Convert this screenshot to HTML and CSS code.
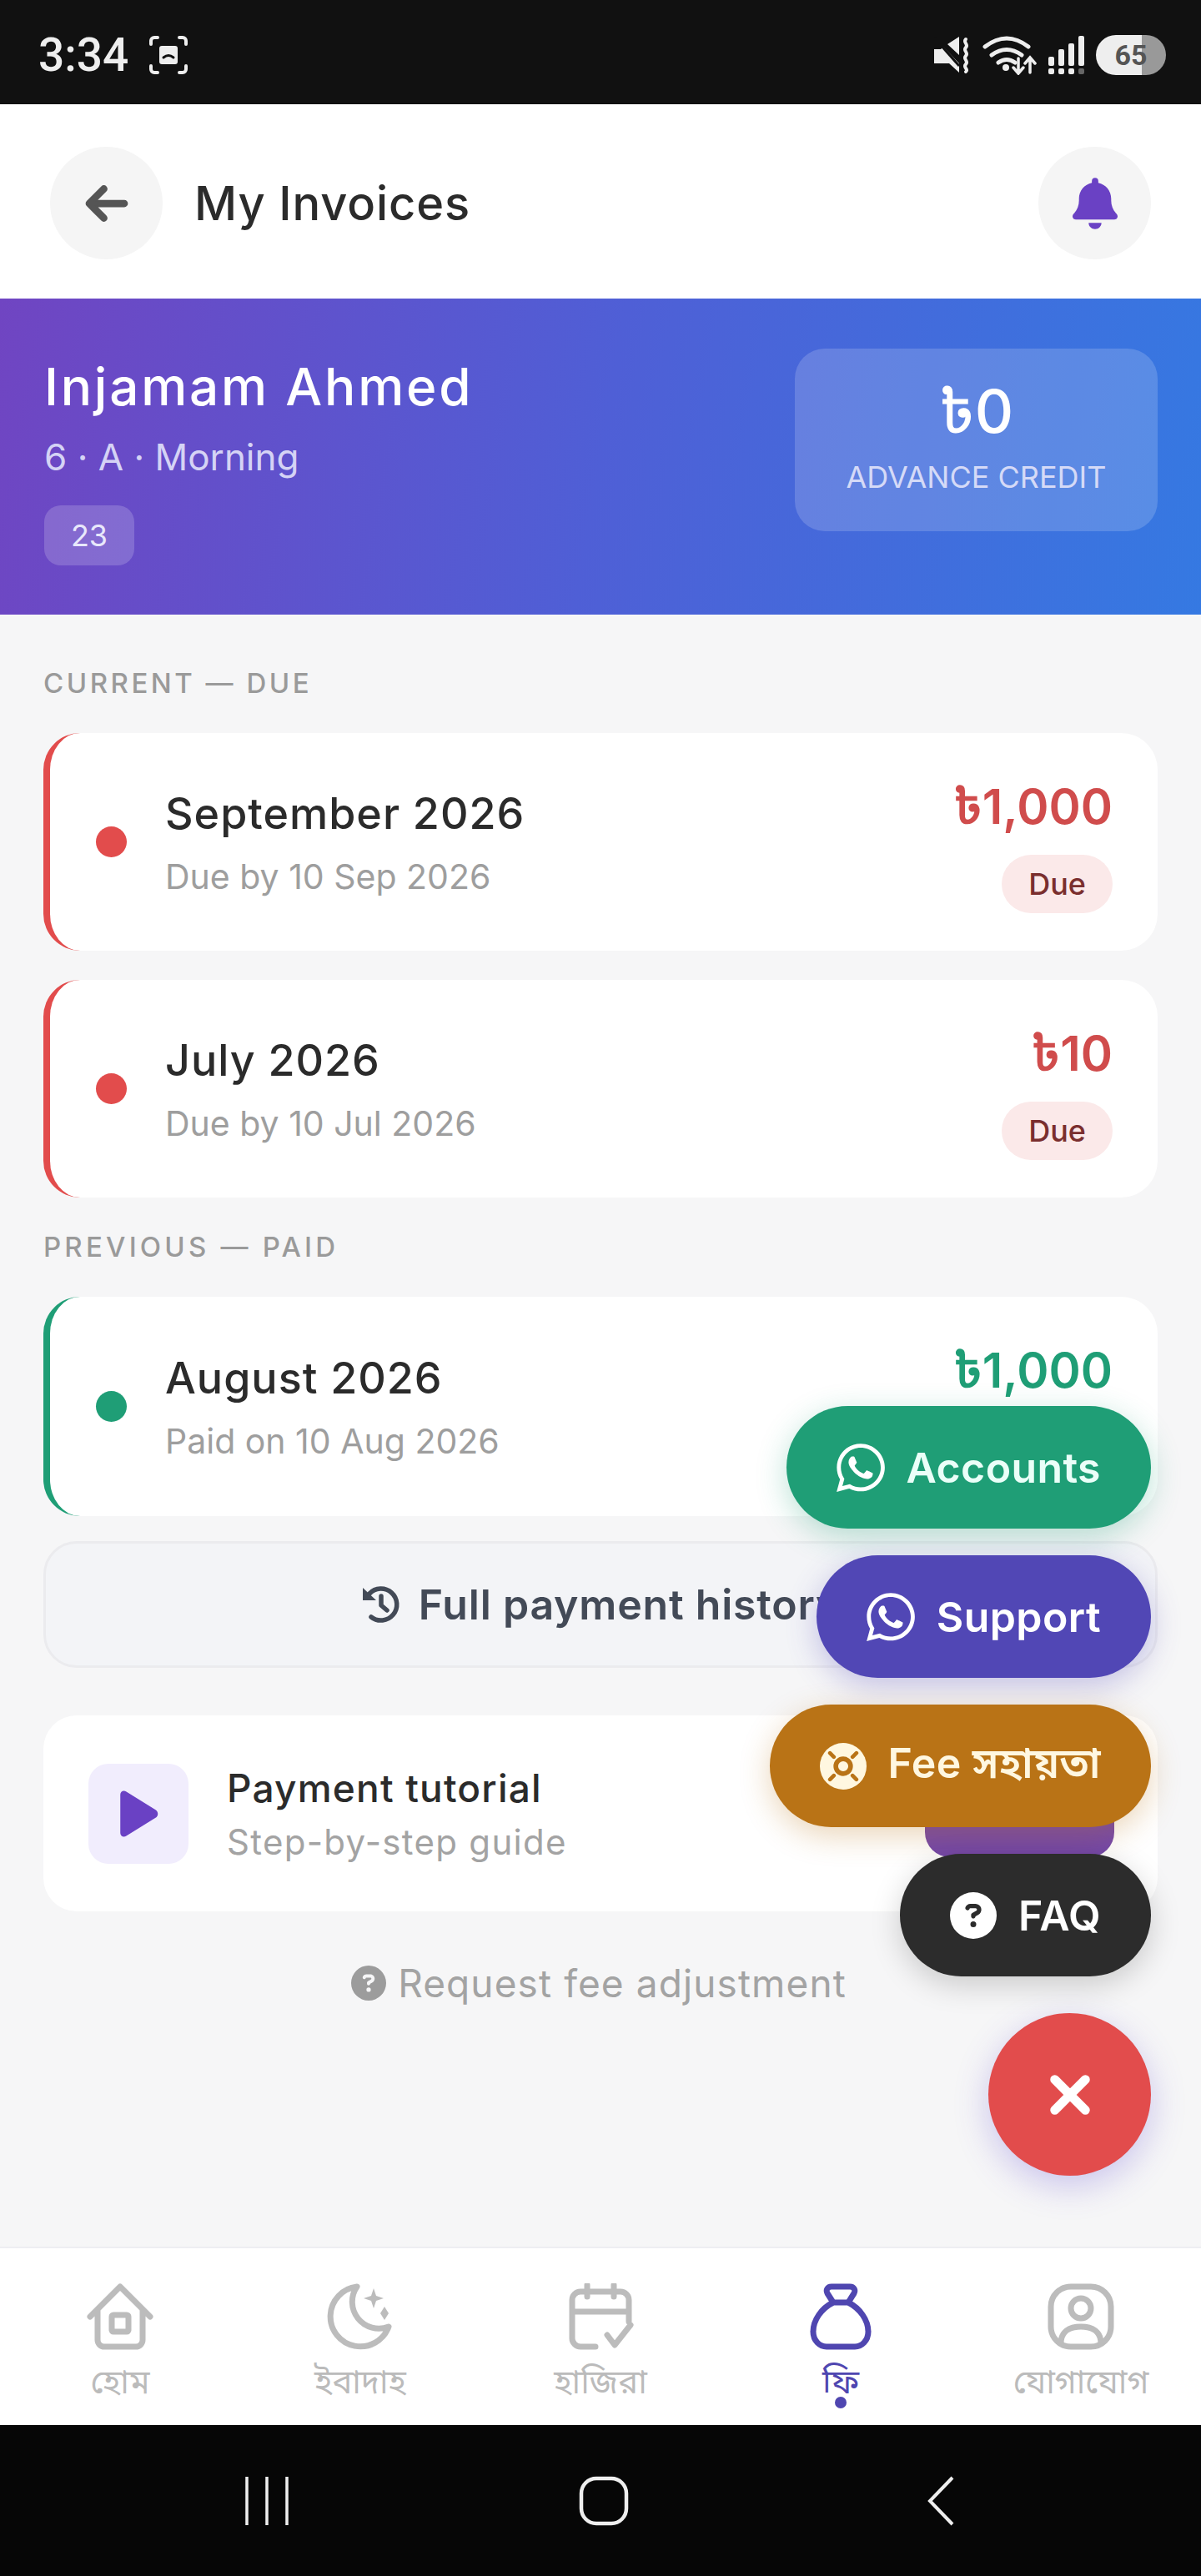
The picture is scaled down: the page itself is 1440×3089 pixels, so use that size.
FILE: index.html
```html
<!DOCTYPE html>
<html lang="en">
<head>
    <meta charset="UTF-8">
    <meta name="viewport" content="width=device-width, initial-scale=1.0">
    <title>My Invoices</title>
    <link rel="stylesheet" href="styles.css">
</head>
<body>
<div class="screen">
    <div class="statusbar">
        <div class="status-left">
            <span class="clock">3:34</span>
            <svg class="shot-icon" viewBox="0 0 48 48" fill="none" stroke="#eee" stroke-width="4" stroke-linecap="round"><path d="M3 11V7a4 4 0 0 1 4-4h4M37 3h4a4 4 0 0 1 4 4v4M45 37v4a4 4 0 0 1-4 4h-4M11 45H7a4 4 0 0 1-4-4v-4"/><rect x="13" y="13" width="22" height="22" rx="3" fill="#eee" stroke="none"/><path d="M18 27q6-5 12 0" stroke="#111" stroke-width="3"/></svg>
        </div>
        <div class="status-right">
            <svg class="mute-icon" viewBox="0 0 46 48" fill="#eee"><path d="M2 17h8l3-3 19 20v11L20 34H2zM18 11 32 2v22z"/><path d="M2 3 32 37" stroke="#111" stroke-width="3"/><path d="M40 5c-4 4 4 6 0 10s4 6 0 10 4 6 0 10 4 6 0 9" fill="none" stroke="#eee" stroke-width="4" stroke-linecap="round"/></svg>
            <svg class="wifi-icon" viewBox="0 0 66 48" fill="none" stroke="#eee" stroke-width="5" stroke-linecap="round"><path d="M3 14q26-20 52 0M11 24q18-13 36 0M19 33q10-7 20 0"/><circle cx="28" cy="39" r="4" fill="#eee" stroke="none"/><path d="M43 28v17m-6-6 6 7 6-7M57 45V28m-6 6 6-7 6 7" stroke-width="3.500"/></svg>
            <svg class="signal-icon" viewBox="0 0 46 48" fill="#eee"><rect x="1" y="26" width="7" height="11" rx="2"/><rect x="13" y="17" width="7" height="20" rx="2"/><rect x="25" y="10" width="7" height="27" rx="2"/><rect x="37" y="1" width="7" height="36" rx="2"/><rect x="1" y="40" width="7" height="7" rx="2"/><rect x="13" y="40" width="7" height="7" rx="2"/><rect x="25" y="40" width="7" height="7" rx="2"/><rect x="37" y="40" width="7" height="7" rx="2" fill="#666"/></svg>
            <span class="battery">65</span>
        </div>
    </div>

    <header class="topbar">
        <div class="topbar-left">
            <span class="round-btn">
                <svg viewBox="0 0 448 512" class="back-icon"><path d="M9.400 233.400a32 32 0 0 0 0 45.300l160 160a32 32 0 0 0 45.300-45.300L109.300 288H416a32 32 0 0 0 0-64H109.300l105.400-105.400a32 32 0 0 0-45.300-45.300z"/></svg>
            </span>
            <h1 class="page-title">My Invoices</h1>
        </div>
        <span class="round-btn">
            <svg viewBox="0 0 448 512" class="bell-icon"><path d="M224 0a32 32 0 0 0-32 32v19.200C119 66 64 130.600 64 208v18.800c0 47-17.300 92.400-48.500 127.600l-7.400 8.300c-8.400 9.400-10.400 22.900-5.300 34.400S19.400 416 32 416h384c12.600 0 24-7.400 29.200-18.900s3.100-25-5.300-34.400l-7.400-8.300C401.300 319.200 384 273.900 384 226.800V208c0-77.400-55-142-128-156.800V32a32 32 0 0 0-32-32zm45.300 493.300A64 64 0 0 0 288 448H160c0 17 6.700 33.300 18.700 45.300S207 512 224 512s33.300-6.700 45.300-18.700z"/></svg>
        </span>
    </header>

    <section class="hero">
        <div class="hero-info">
            <div class="hero-name">Injamam Ahmed</div>
            <div class="hero-class">6 · A · Morning</div>
            <span class="hero-roll">23</span>
        </div>
        <div class="credit-box">
            <div class="credit-amount">৳0</div>
            <div class="credit-label">ADVANCE CREDIT</div>
        </div>
    </section>

    <main class="content">
        <div class="section-label">CURRENT — DUE</div>
        <div class="invoice due">
            <span class="dot"></span>
            <div class="invoice-text">
                <div class="invoice-month">September 2026</div>
                <div class="invoice-sub">Due by 10 Sep 2026</div>
            </div>
            <div class="invoice-side">
                <div class="invoice-amount">৳1,000</div>
                <span class="badge">Due</span>
            </div>
        </div>
        <div class="invoice due">
            <span class="dot"></span>
            <div class="invoice-text">
                <div class="invoice-month">July 2026</div>
                <div class="invoice-sub">Due by 10 Jul 2026</div>
            </div>
            <div class="invoice-side">
                <div class="invoice-amount">৳10</div>
                <span class="badge">Due</span>
            </div>
        </div>
        <div class="section-label prev">PREVIOUS — PAID</div>
        <div class="invoice paid">
            <span class="dot"></span>
            <div class="invoice-text">
                <div class="invoice-month">August 2026</div>
                <div class="invoice-sub">Paid on 10 Aug 2026</div>
            </div>
            <div class="invoice-side">
                <div class="invoice-amount">৳1,000</div>
            </div>
        </div>

        <div class="history-btn">
            <svg viewBox="0 0 50 50" class="history-icon"><path class="history-arc" d="M11 12A19 19 0 1 1 13 40M25 15v11l7 6"/><path d="M3 5l16 15H3z"/></svg>
            <span class="history-label">Full payment history</span>
        </div>

        <div class="tutorial">
            <span class="tutorial-thumb">
                <svg viewBox="0 0 40 48" class="play-icon"><path d="M2 5c0-3 3-5 6-3l29 18c3 2 3 6 0 8L8 46c-3 2-6 0-6-3z"/></svg>
            </span>
            <div class="tutorial-text">
                <div class="tutorial-title">Payment tutorial</div>
                <div class="tutorial-sub">Step-by-step guide</div>
            </div>
            <span class="watch-btn"></span>
        </div>

        <div class="request-link">
            <svg viewBox="0 0 512 512" class="request-icon"><path d="M256 512a256 256 0 1 0 0-512 256 256 0 1 0 0 512zM169.800 165.300c7.900-22.300 29.100-37.300 52.800-37.300h58.300c34.900 0 63.100 28.300 63.100 63.100 0 22.600-12.100 43.500-31.700 54.800L280 264.400c-.2 13-10.900 23.600-24 23.600-13.300 0-24-10.700-24-24v-13.500c0-8.600 4.600-16.500 12.100-20.800l44.300-25.400c4.700-2.700 7.600-7.700 7.600-13.100 0-8.400-6.800-15.100-15.100-15.100h-58.300c-3.400 0-6.400 2.100-7.500 5.300l-.4 1.200c-4.400 12.500-18.200 19-30.600 14.600s-19-18.200-14.600-30.600l.4-1.200zM224 352a32 32 0 1 1 64 0 32 32 0 1 1-64 0z"/></svg>
            Request fee adjustment
        </div>
    </main>

    <nav class="bottomnav">
        <div class="nav-item">
            <svg viewBox="0 0 80 80" class="nav-icon"><path d="M4 40 40 4l36 36M13 32v36a8 8 0 0 0 8 8h38a8 8 0 0 0 8-8V32"/><rect x="30" y="38" width="20" height="20" rx="2"/></svg>
            <span>হোম</span>
        </div>
        <div class="nav-item">
            <svg viewBox="0 0 80 80" class="nav-icon"><path d="M36 4a36 36 0 1 0 38 48 32 32 0 0 1-38-48z"/><path class="fill" d="m56 6 3 9 9 3-9 3-3 9-3-9-9-3 9-3zM69 28l5 8-5 8-5-8z"/></svg>
            <span>ইবাদাহ</span>
        </div>
        <div class="nav-item">
            <svg viewBox="0 0 80 80" class="nav-icon"><path d="M34 76H16a10 10 0 0 1-10-10V20a10 10 0 0 1 10-10h48a10 10 0 0 1 10 10v26M6 34h68M24 2v14M56 2v14M48 62l9 12 19-24"/></svg>
            <span>হাজিরা</span>
        </div>
        <div class="nav-item active">
            <svg viewBox="0 0 80 80" class="nav-icon"><path d="M29 4h22c5 0 7 4 5 8l-7 11H31l-7-11c-2-4 0-8 5-8zM31 23C17 30 7 44 7 58c0 11 8 18 16 18h34c8 0 16-7 16-18 0-14-10-28-24-35"/></svg>
            <span>ফি</span>
        </div>
        <div class="nav-item">
            <svg viewBox="0 0 80 80" class="nav-icon"><rect x="4" y="4" width="72" height="72" rx="24"/><circle cx="40" cy="30" r="12"/><path d="M16 72c0-14 10-20 24-20s24 6 24 20"/></svg>
            <span>যোগাযোগ</span>
        </div>
    </nav>

    <div class="systemnav">
        <svg viewBox="0 0 52 60" class="sys-bars" fill="none" stroke="#eee" stroke-width="3.500"><path d="M2 1v58M26 1v58M50 1v58"/></svg>
        <svg viewBox="0 0 60 60" class="sys-home" fill="none" stroke="#eee" stroke-width="4.500"><rect x="3" y="3" width="54" height="54" rx="18"/></svg>
        <svg viewBox="0 0 34 60" class="sys-back" fill="none" stroke="#eee" stroke-width="4"><path d="M31 2 4 30l27 28"/></svg>
    </div>

    <div class="fab-stack">
        <div class="fab fab-accounts">
            <svg viewBox="0 0 448 512" class="fab-icon wa-icon"><path d="M380.900 97.100C339 55.100 283.200 32 223.900 32c-122.400 0-222 99.600-222 222 0 39.100 10.200 77.300 29.600 111L0 480l117.700-30.900c32.400 17.700 68.900 27 106.100 27h.1c122.300 0 224.100-99.600 224.100-222 0-59.300-25.200-115-67.100-157zm-157 341.600c-33.200 0-65.700-8.900-94-25.700l-6.700-4-69.800 18.300L72 359.200l-4.400-7c-18.500-29.400-28.200-63.300-28.200-98.200 0-101.700 82.800-184.500 184.600-184.500 49.300 0 95.600 19.200 130.400 54.100 34.800 34.900 56.200 81.200 56.100 130.500 0 101.800-84.900 184.600-186.600 184.600zm101.200-138.200c-5.500-2.800-32.800-16.200-37.900-18-5.100-1.900-8.800-2.800-12.500 2.800-3.700 5.600-14.300 18-17.600 21.800-3.200 3.700-6.500 4.200-12 1.400-32.600-16.300-54-29.100-75.500-66-5.700-9.800 5.700-9.100 16.300-30.300 1.800-3.700.9-6.900-.5-9.700-1.400-2.800-12.500-30.100-17.100-41.200-4.500-10.800-9.100-9.300-12.500-9.500-3.200-.2-6.900-.2-10.600-.2-3.700 0-9.700 1.400-14.800 6.900-5.100 5.600-19.400 19-19.400 46.300 0 27.300 19.900 53.700 22.600 57.400 2.800 3.700 39.100 59.700 94.800 83.800 35.200 15.200 49 16.500 66.600 13.900 10.700-1.600 32.800-13.400 37.400-26.400 4.600-13 4.600-24.100 3.200-26.400-1.300-2.500-5-3.900-10.500-6.600z"/></svg>
            Accounts
        </div>
        <div class="fab fab-support">
            <svg viewBox="0 0 448 512" class="fab-icon wa-icon"><path d="M380.900 97.100C339 55.100 283.200 32 223.900 32c-122.400 0-222 99.600-222 222 0 39.100 10.200 77.300 29.600 111L0 480l117.700-30.900c32.400 17.700 68.900 27 106.100 27h.1c122.300 0 224.100-99.600 224.100-222 0-59.300-25.200-115-67.100-157zm-157 341.600c-33.200 0-65.700-8.900-94-25.700l-6.700-4-69.800 18.300L72 359.200l-4.400-7c-18.500-29.400-28.200-63.300-28.200-98.200 0-101.700 82.800-184.500 184.600-184.500 49.300 0 95.600 19.200 130.400 54.100 34.800 34.900 56.200 81.200 56.100 130.500 0 101.800-84.900 184.600-186.600 184.600zm101.200-138.200c-5.500-2.800-32.800-16.200-37.900-18-5.100-1.900-8.800-2.800-12.500 2.800-3.700 5.600-14.300 18-17.600 21.800-3.200 3.700-6.500 4.200-12 1.400-32.600-16.300-54-29.100-75.500-66-5.700-9.800 5.700-9.100 16.300-30.300 1.800-3.700.9-6.900-.5-9.700-1.400-2.800-12.500-30.100-17.100-41.200-4.500-10.800-9.100-9.300-12.500-9.500-3.200-.2-6.900-.2-10.600-.2-3.700 0-9.700 1.400-14.800 6.900-5.100 5.600-19.400 19-19.400 46.300 0 27.300 19.900 53.700 22.600 57.400 2.800 3.700 39.100 59.700 94.800 83.800 35.200 15.200 49 16.500 66.600 13.900 10.700-1.600 32.800-13.400 37.400-26.400 4.600-13 4.600-24.100 3.200-26.400-1.300-2.500-5-3.900-10.500-6.600z"/></svg>
            Support
        </div>
        <div class="fab fab-fee">
            <svg viewBox="0 0 60 60" class="fab-icon ring-icon"><circle cx="30" cy="30" r="30"/><circle class="ring-hole" cx="30" cy="30" r="9.500"/><path class="ring-cuts" d="m13 13 5 5M47 13l-5 5M13 47l5-5M47 47l-5-5"/></svg>
            Fee সহায়তা
        </div>
        <div class="fab fab-faq">
            <svg viewBox="0 0 512 512" class="fab-icon"><path d="M256 512a256 256 0 1 0 0-512 256 256 0 1 0 0 512zM169.800 165.300c7.900-22.300 29.100-37.300 52.800-37.300h58.300c34.900 0 63.100 28.300 63.100 63.100 0 22.600-12.100 43.500-31.700 54.800L280 264.400c-.2 13-10.900 23.600-24 23.600-13.300 0-24-10.700-24-24v-13.500c0-8.600 4.600-16.500 12.100-20.800l44.300-25.400c4.700-2.700 7.600-7.700 7.600-13.100 0-8.400-6.800-15.100-15.100-15.100h-58.300c-3.400 0-6.400 2.100-7.500 5.300l-.4 1.200c-4.400 12.500-18.200 19-30.600 14.600s-19-18.200-14.600-30.600l.4-1.200zM224 352a32 32 0 1 1 64 0 32 32 0 1 1-64 0z"/></svg>
            FAQ
        </div>
        <div class="fab-close">
            <svg viewBox="0 0 60 60" class="close-icon"><path d="M8 8l44 44M52 8 8 52"/></svg>
        </div>
    </div>
</div>
</body>
</html>
```
FILE: styles.css
```css
* { box-sizing: border-box; }
body { margin: 0; font-family: Inter, "Noto Sans", "Noto Sans Bengali", "Liberation Sans", sans-serif; background: #f6f6f7; color: #2b2b2b; }
.screen { position: relative; width: 1440px; height: 3089px; display: flex; flex-direction: column; overflow: hidden; }

/* phone status bar */
.statusbar { height: 125px; background: #111; display: flex; justify-content: space-between; align-items: center; padding: 6px 28px 0 46px; flex: none; }
.status-left, .status-right { display: flex; align-items: center; }
.clock { font-family: Roboto, sans-serif; font-weight: 500; font-size: 55px; color: #eee; }
.shot-icon { width: 48px; height: 48px; margin-left: 24px; }
.mute-icon { width: 46px; height: 48px; }
.wifi-icon { width: 66px; height: 48px; margin-left: 14px; }
.signal-icon { width: 46px; height: 48px; margin-left: 12px; }
.battery { width: 84px; height: 48px; margin-left: 12px; margin-right: 14px; border-radius: 24px; background: linear-gradient(90deg, #eee 0 66%, #999 66%); color: #555; font-family: Roboto, sans-serif; font-weight: 700; font-size: 34px; display: flex; align-items: center; justify-content: center; }

/* page header */
.topbar { height: 233px; background: #fff; display: flex; justify-content: space-between; align-items: center; padding: 4px 60px 0; flex: none; }
.topbar-left { display: flex; align-items: center; gap: 38px; }
.round-btn { width: 135px; height: 135px; border-radius: 50%; background: #f5f5f5; display: flex; align-items: center; justify-content: center; }
.back-icon { width: 56px; height: 56px; fill: #555; stroke: #555; stroke-width: 16; }
.bell-icon { width: 54px; height: 62px; fill: #6a41c4; }
.page-title { margin: 0; font-size: 56px; font-weight: 500; letter-spacing: 0.9px; color: #2b2b2b; }

.hero { height: 379px; background: linear-gradient(100deg, #7045c2 0%, #4f5fd6 50%, #3579e2 100%); color: #fff; padding: 60px 52px 0 53px; display: flex; justify-content: space-between; align-items: flex-start; flex: none; }
.hero-name { font-size: 62px; font-weight: 500; letter-spacing: 2.800px; line-height: 72px; margin-top: 10px; }
.hero-class { font-size: 44px; color: #d5d3f5; line-height: 56px; margin-top: 20px; }
.hero-roll { display: inline-block; margin-top: 30px; width: 108px; height: 72px; line-height: 72px; text-align: center; border-radius: 20px; background: rgba(255,255,255,0.18); font-size: 36px; color: #e8e8fb; }
.credit-box { width: 435px; height: 219px; border-radius: 36px; background: rgba(255,255,255,0.17); text-align: center; padding-top: 30px; }
.credit-amount { font-size: 72px; font-weight: 500; line-height: 90px; }
.credit-label { font-size: 36px; color: #d5daf7; margin-top: 12px; }

.content { flex: 1; padding: 0 52px; display: flex; flex-direction: column; }
.section-label { font-size: 33px; letter-spacing: 3.500px; color: #9a9a9a; font-weight: 500; margin-top: 60px; margin-bottom: 38px; line-height: 44px; }
.section-label.prev { margin-top: 2px; margin-bottom: 38px; letter-spacing: 4.200px; }

.invoice { height: 261px; background: #fff; border-radius: 44px; border-left: 8px solid #e24c4c; display: flex; align-items: center; padding: 0 54px 0 55px; margin-bottom: 35px; }
.invoice.paid { height: 263px; border-left-color: #1f9e76; margin-bottom: 30px; }
.dot { width: 37px; height: 37px; border-radius: 50%; background: #e24c4c; flex: none; }
.paid .dot { background: #1f9e76; }
.invoice-text { flex: 1; margin-left: 46px; }
.invoice-month { font-size: 52px; font-weight: 500; letter-spacing: 1px; line-height: 70px; color: #2b2b2b; }
.invoice-sub { font-size: 41px; color: #9e9e9e; line-height: 56px; margin-top: 12px; }
.invoice-side { text-align: right; align-self: flex-start; padding-top: 52px; }
.invoice-amount { font-size: 58px; font-weight: 600; line-height: 72px; color: #d04c4c; }
.paid .invoice-amount { color: #1f9e76; }
.badge { display: inline-block; margin-top: 22px; height: 70px; line-height: 70px; padding: 0 32px; border-radius: 35px; background: #fbe9e9; font-size: 36px; font-weight: 500; color: #7a2e2e; }

.history-btn { height: 152px; border-radius: 40px; background: #f3f4f7; border: 3px solid #ebebee; display: flex; align-items: center; justify-content: center; gap: 20px; font-size: 50px; font-weight: 600; letter-spacing: 0.800px; color: #434a57; flex: none; }
.history-icon { width: 50px; height: 50px; fill: #434a57; }
.history-arc { fill: none; stroke: #434a57; stroke-width: 5.500; stroke-linecap: round; stroke-linejoin: round; }

.tutorial { margin-top: 57px; height: 235px; border-radius: 40px; background: #fff; display: flex; align-items: center; padding: 0 52px 0 54px; flex: none; }
.tutorial-thumb { width: 120px; height: 120px; border-radius: 24px; background: #f1edfd; display: flex; align-items: center; justify-content: center; flex: none; }
.play-icon { width: 50px; height: 58px; fill: #6a41c4; }
.tutorial-text { flex: 1; margin-left: 46px; }
.tutorial-title { font-size: 46px; font-weight: 500; letter-spacing: 1.200px; line-height: 58px; }
.tutorial-sub { font-size: 42px; letter-spacing: 1.300px; color: #a3a3a3; line-height: 52px; margin-top: 10px; }
.watch-btn { width: 227px; height: 104px; border-radius: 30px; background: #7548ab; }

.request-link { margin-top: 58px; display: flex; align-items: center; justify-content: center; gap: 14px; font-size: 46px; letter-spacing: 1.100px; color: #a3a3a3; padding-right: 4px; }
.request-icon { width: 42px; height: 42px; fill: #9c9c9c; }

.bottomnav { height: 214px; background: #fff; border-top: 2px solid #eeeef2; display: grid; grid-template-columns: repeat(5, 1fr); flex: none; }
.nav-item { display: flex; flex-direction: column; align-items: center; padding-top: 42px; font-size: 40px; color: #bbb; }
.nav-item span { line-height: 44px; margin-top: 16px; white-space: nowrap; }
.nav-item.active { color: #4f46b0; }
.nav-item.active::after { content: ""; width: 14px; height: 14px; border-radius: 50%; background: #4f46b0; margin-top: -4px; flex: none; }
.nav-icon { width: 80px; height: 80px; fill: none; stroke: #bcbcbc; stroke-width: 7; stroke-linecap: round; stroke-linejoin: round; flex: none; }
.nav-icon .fill { fill: #bcbcbc; stroke: none; }
.active .nav-icon { stroke: #4f46b0; }

.systemnav { height: 181px; background: #060606; flex: none; display: grid; grid-template-columns: 1fr 1fr 1fr; align-items: center; justify-items: center; padding: 0 110px 0 118px; }
.sys-bars { width: 52px; height: 60px; }
.sys-home { width: 60px; height: 60px; }
.sys-back { width: 34px; height: 60px; }

/* speed dial, open, sits over the page */
.fab-stack { position: absolute; right: 60px; top: 1686px; display: flex; flex-direction: column; align-items: flex-end; gap: 32px; }
.fab { height: 147px; border-radius: 74px; display: flex; align-items: center; gap: 26px; padding: 0 60px 0 60px; font-size: 50px; font-weight: 600; letter-spacing: 0.400px; color: #fff; }
.fab-icon { width: 56px; height: 56px; fill: #fff; flex: none; }
.wa-icon { width: 58px; height: 66px; }
.fab-accounts { background: #1f9e76; box-shadow: 0 10px 36px rgba(31,158,118,0.3); color: #eafff8; }
.fab-support { background: #5147b5; box-shadow: 0 10px 36px rgba(81,71,181,0.3); }
.fab-fee { background: #b97316; box-shadow: 0 10px 36px rgba(185,115,22,0.3); color: #fff7e0; }
.fab-faq { background: #2c2c2c; box-shadow: 0 10px 36px rgba(0,0,0,0.18); }
.ring-icon { fill: #fff7e0; }
.ring-hole { fill: #fff7e0; stroke: #b97316; stroke-width: 6; }
.ring-cuts { fill: none; stroke: #b97316; stroke-width: 5; stroke-linecap: round; }
.fab-close { width: 195px; height: 195px; border-radius: 50%; background: #e24c4c; box-shadow: 0 12px 40px rgba(90,70,210,0.28); display: flex; align-items: center; justify-content: center; margin-top: 12px; }
.close-icon { width: 50px; height: 50px; fill: none; stroke: #fff; stroke-width: 13; stroke-linecap: round; }
```
